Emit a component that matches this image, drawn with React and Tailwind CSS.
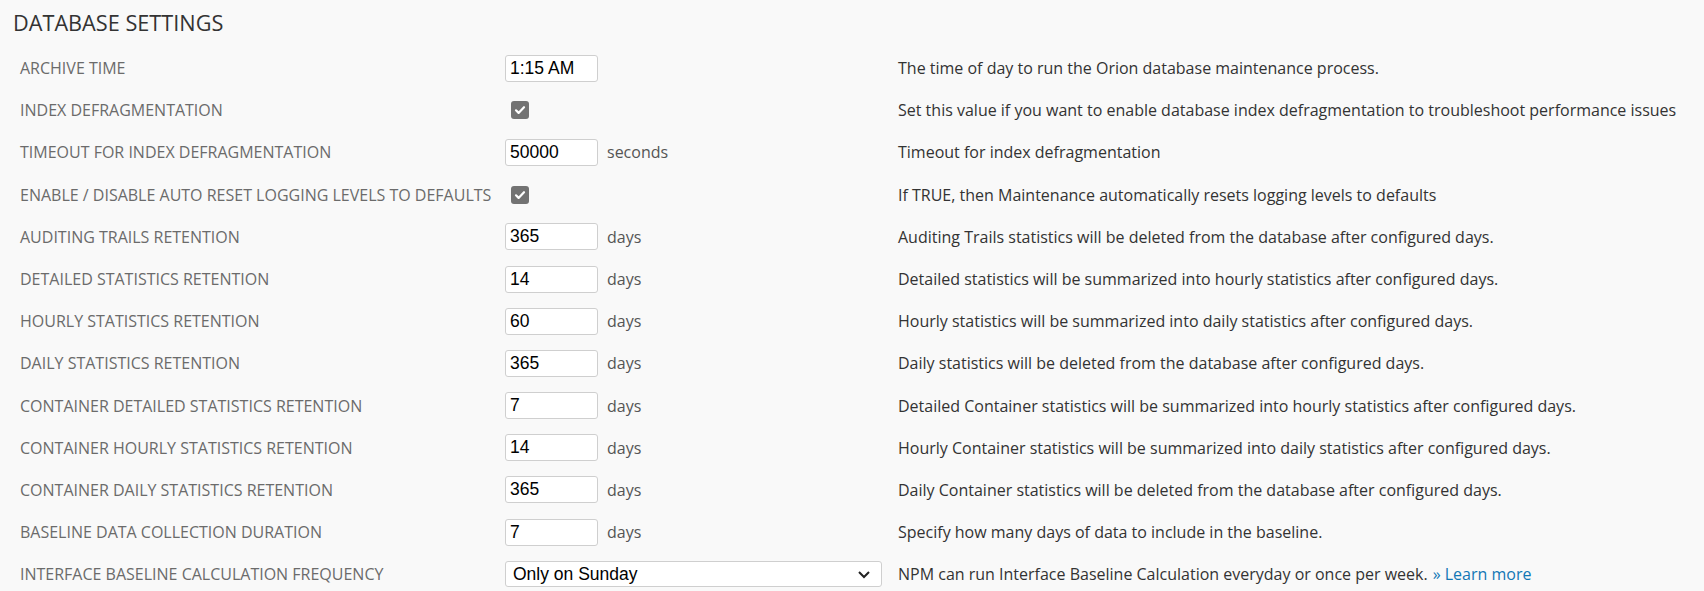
import React from "react";

const rows = [
  { label: "ARCHIVE TIME", type: "text", value: "1:15 AM", desc: "The time of day to run the Orion database maintenance process." },
  { label: "INDEX DEFRAGMENTATION", type: "check", desc: "Set this value if you want to enable database index defragmentation to troubleshoot performance issues" },
  { label: "TIMEOUT FOR INDEX DEFRAGMENTATION", type: "text", value: "50000", unit: "seconds", desc: "Timeout for index defragmentation" },
  { label: "ENABLE / DISABLE AUTO RESET LOGGING LEVELS TO DEFAULTS", type: "check", desc: "If TRUE, then Maintenance automatically resets logging levels to defaults" },
  { label: "AUDITING TRAILS RETENTION", type: "text", value: "365", unit: "days", desc: "Auditing Trails statistics will be deleted from the database after configured days." },
  { label: "DETAILED STATISTICS RETENTION", type: "text", value: "14", unit: "days", desc: "Detailed statistics will be summarized into hourly statistics after configured days." },
  { label: "HOURLY STATISTICS RETENTION", type: "text", value: "60", unit: "days", desc: "Hourly statistics will be summarized into daily statistics after configured days." },
  { label: "DAILY STATISTICS RETENTION", type: "text", value: "365", unit: "days", desc: "Daily statistics will be deleted from the database after configured days." },
  { label: "CONTAINER DETAILED STATISTICS RETENTION", type: "text", value: "7", unit: "days", desc: "Detailed Container statistics will be summarized into hourly statistics after configured days." },
  { label: "CONTAINER HOURLY STATISTICS RETENTION", type: "text", value: "14", unit: "days", desc: "Hourly Container statistics will be summarized into daily statistics after configured days." },
  { label: "CONTAINER DAILY STATISTICS RETENTION", type: "text", value: "365", unit: "days", desc: "Daily Container statistics will be deleted from the database after configured days." },
  { label: "BASELINE DATA COLLECTION DURATION", type: "text", value: "7", unit: "days", desc: "Specify how many days of data to include in the baseline." },
  { label: "INTERFACE BASELINE CALCULATION FREQUENCY", type: "select", value: "Only on Sunday", desc: "NPM can run Interface Baseline Calculation everyday or once per week.", link: "» Learn more" },
];

function Check() {
  return (
    <span className="w-[18px] h-[18px] ml-[6px] rounded-[3px] bg-[#737373] flex items-center justify-center">
      <svg width="12" height="12" viewBox="0 0 12 12">
        <path d="M2 6.3l2.6 2.6L10 3.2" fill="none" stroke="#fff" strokeWidth="2.2" strokeLinecap="round" strokeLinejoin="round" />
      </svg>
    </span>
  );
}

function Control({ row }) {
  if (row.type === "check") return <Check />;
  if (row.type === "select") {
    return (
      <div className="w-[377px] h-[26px] bg-white border border-[#cfcfcf] rounded-[3px] flex items-center justify-between pl-[7px] pr-[10px] font-['Liberation_Sans',Arial,sans-serif] text-[17.5px] text-black">
        <span>{row.value}</span>
        <svg width="14" height="9" viewBox="0 0 14 9">
          <path d="M2 2l5 5 5-5" fill="none" stroke="#222" strokeWidth="2" />
        </svg>
      </div>
    );
  }
  return (
    <div className="flex items-center">
      <input
        readOnly
        value={row.value}
        className="w-[93px] h-[27px] bg-white border border-[#cfcfcf] rounded-[3px] pl-[4px] font-['Liberation_Sans',Arial,sans-serif] text-[17.5px] text-black outline-none"
      />
      {row.unit && <span className="ml-[9px] text-[#555]">{row.unit}</span>}
    </div>
  );
}

export default function App() {
  return (
    <div className="min-h-[591px] bg-[#f9f9f9] font-['Open_Sans',sans-serif] text-[16px]">
      <h2 className="h-[47px] pl-[13px] pt-[8px] text-[21.7px] leading-[30px] text-[#333]">DATABASE SETTINGS</h2>
      <div className="pl-[20px]">
        {rows.map((r) => (
          <div key={r.label} className="grid grid-cols-[485px_393px_1fr] h-[42.2px] items-center">
            <div className="text-[#6b6b6b]">{r.label}</div>
            <div className="flex items-center">
              <Control row={r} />
            </div>
            <div className="text-[#333] whitespace-nowrap">
              {r.desc}
              {r.link && <a className="ml-[5px] text-[#1277b5]">{r.link}</a>}
            </div>
          </div>
        ))}
      </div>
    </div>
  );
}
